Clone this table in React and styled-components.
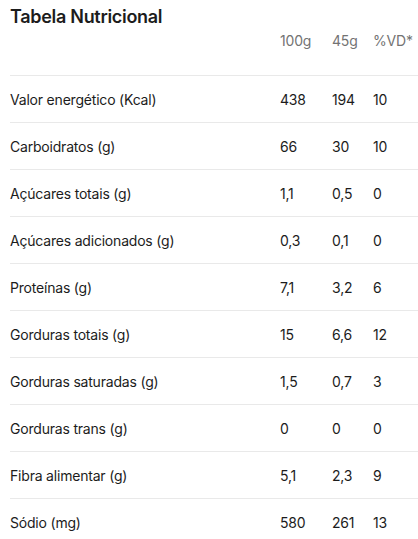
import styled, { createGlobalStyle } from "styled-components";

const GlobalStyle = createGlobalStyle`
  body {
    margin: 0;
    background: #fff;
    font-family: Inter, "Liberation Sans", sans-serif;
  }
`;

const Wrapper = styled.div`
  padding-left: 10px;
  color: #1c1c1c;
`;

const Title = styled.h2`
  margin: 0;
  padding-top: 5px;
  font-size: 18px;
  line-height: 24px;
  font-weight: 600;
  letter-spacing: -0.3px;
`;

const Row = styled.div`
  display: grid;
  grid-template-columns: 270px 52px 41px 1fr;
  align-items: center;
  height: 46px;
  border-top: 1px solid #e9e9e9;
  font-size: 14px;
  letter-spacing: -0.2px;
  color: #1c1c1c;
`;

const HeadRow = styled(Row)`
  height: 30px;
  align-items: flex-start;
  padding-top: 3px;
  margin-bottom: 13px;
  border-top: none;
  color: #737373;
`;

const Cell = styled.span`
  white-space: nowrap;
`;

const data = [
  ["Valor energético (Kcal)", "438", "194", "10"],
  ["Carboidratos (g)", "66", "30", "10"],
  ["Açúcares totais (g)", "1,1", "0,5", "0"],
  ["Açúcares adicionados (g)", "0,3", "0,1", "0"],
  ["Proteínas (g)", "7,1", "3,2", "6"],
  ["Gorduras totais (g)", "15", "6,6", "12"],
  ["Gorduras saturadas (g)", "1,5", "0,7", "3"],
  ["Gorduras trans (g)", "0", "0", "0"],
  ["Fibra alimentar (g)", "5,1", "2,3", "9"],
  ["Sódio (mg)", "580", "261", "13"],
];

const App = () => {
  return (
    <>
      <GlobalStyle />
      <Wrapper>
        <Title>Tabela Nutricional</Title>
        <HeadRow>
          <Cell />
          <Cell>100g</Cell>
          <Cell>45g</Cell>
          <Cell>%VD*</Cell>
        </HeadRow>
        {data.map((r) => (
          <Row key={r[0]}>
            {r.map((c, i) => (
              <Cell key={i}>{c}</Cell>
            ))}
          </Row>
        ))}
      </Wrapper>
    </>
  );
};

export default App;
